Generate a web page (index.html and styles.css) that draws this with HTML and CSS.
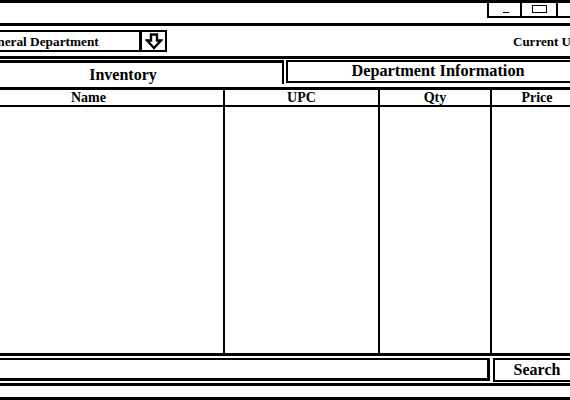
FILE: index.html
```html
<!DOCTYPE html>
<html>
<head>
<meta charset="utf-8">
<link rel="stylesheet" href="styles.css">
</head>
<body>
<div class="window">
  <div class="titlebar">
    <div class="winbtns">
      <div class="wbtn"><span class="min"></span></div>
      <div class="wbtn"><span class="restore"></span></div>
      <div class="wbtn"></div>
    </div>
  </div>
  <div class="toolbar">
    <div class="dropdown">
      <div class="dd-text">General Department</div>
      <div class="dd-arrow">
        <svg width="18" height="17" viewBox="0 0 18 17"><path d="M6 1.5 H12 V7.5 H16 L9 15 L2 7.5 H6 Z" fill="none" stroke="#000" stroke-width="2.4" stroke-linejoin="miter"/></svg>
      </div>
    </div>
    <div class="user">Current User: Admin</div>
  </div>
  <div class="tabs">
    <div class="tab active">Inventory</div>
    <div class="tab">Department Information</div>
  </div>
  <div class="table">
    <div class="row head">
      <div class="cell">Name</div>
      <div class="cell">UPC</div>
      <div class="cell">Qty</div>
      <div class="cell last">Price</div>
    </div>
    <div class="row body">
      <div class="cell"></div>
      <div class="cell"></div>
      <div class="cell"></div>
      <div class="cell last"></div>
    </div>
  </div>
  <div class="searchrow">
    <div class="search-input"></div>
    <div class="search-btn">Search</div>
  </div>
  <div class="status"></div>
</div>
</body>
</html>
```

FILE: styles.css
```css
* { box-sizing: border-box; }
html, body { margin: 0; padding: 0; background: #fff; overflow: hidden; }
body {
  font-family: "Liberation Serif", "Times New Roman", serif;
  font-weight: bold;
  color: #000;
  width: 570px;
  height: 400px;
}
.window {
  margin-left: -46px;
  width: 640px;
  border-top: 3px solid #000;
}
.titlebar {
  height: 23px;
  display: flex;
  justify-content: flex-end;
  align-items: flex-start;
  border-bottom: 3px solid #000;
}
.winbtns {
  display: flex;
  height: 15px;
  border-left: 2px solid #000;
  border-bottom: 2px solid #000;
}
.wbtn {
  width: 36px;
  height: 13px;
  border-right: 2px solid #000;
  display: flex;
  align-items: center;
  justify-content: center;
}
.wbtn:first-child { width: 33px; }
.min {
  display: block;
  width: 6px;
  height: 1.5px;
  background: #000;
  margin-top: 6px;
  margin-left: 3px;
}
.restore {
  display: block;
  width: 15px;
  height: 8px;
  border: 1.5px solid #000;
  margin-top: -2px;
}
.toolbar {
  height: 33px;
  border-bottom: 3px solid #000;
  display: flex;
  align-items: flex-start;
  padding-top: 4px;
  padding-left: 24px;
}
.dropdown {
  flex-shrink: 0;
  display: flex;
  height: 22px;
  width: 189px;
  border: 2px solid #000;
}
.dd-text {
  flex: 1;
  font-size: 13.3px;
  line-height: 16px;
  padding-left: 1px;
  padding-top: 2px;
  white-space: nowrap;
}
.dd-arrow {
  width: 26px;
  border-left: 3px solid #000;
  display: flex;
  align-items: center;
  justify-content: center;
}
.dd-arrow svg { display: block; }
.user {
  flex-shrink: 0;
  margin-left: 346px;
  font-size: 13px;
  line-height: 16px;
  padding-top: 4px;
  white-space: nowrap;
}
.tabs {
  margin-top: 1px;
  height: 24px;
  display: flex;
  padding-left: 8px;
  gap: 2px;
}
.tab {
  flex-shrink: 0;
  font-size: 16px;
  line-height: 18px;
  text-align: center;
  white-space: nowrap;
}
.tab.active {
  width: 322px;
  height: 24px;
  border-top: 3px solid #000;
  border-left: 2px solid #000;
  border-right: 2px solid #000;
  padding-top: 3px;
}
.tab:not(.active) {
  width: 304px;
  height: 23px;
  border: 2px solid #000;
  font-size: 16.3px;
}
.table {
  margin-top: 3px;
  margin-right: 12px;
  border-top: 3px solid #000;
  border-bottom: 3px solid #000;
}
.row {
  display: grid;
  grid-template-columns: 271px 155px 112px 1fr;
}
.row.head {
  height: 17px;
  border-bottom: 2px solid #000;
}
.row.body { height: 246px; }
.cell {
  border-right: 2px solid #000;
  font-size: 14px;
  line-height: 15px;
  text-align: center;
}
.cell.last { border-right: none; }
.searchrow {
  margin-top: 2px;
  display: flex;
  gap: 3px;
  padding-right: 13px;
  padding-bottom: 1px;
  height: 28px;
  border-bottom: 3px solid #000;
}
.search-input {
  flex: 1;
  height: 23px;
  border: 2px solid #000;
  border-width: 2px 3px 3px 2px;
}
.search-btn {
  flex-shrink: 0;
  width: 88px;
  height: 24px;
  border: 2px solid #000;
  font-size: 16px;
  line-height: 18px;
  padding-top: 1px;
  text-align: center;
}
.status {
  height: 14px;
  border-bottom: 3px solid #000;
}
```
